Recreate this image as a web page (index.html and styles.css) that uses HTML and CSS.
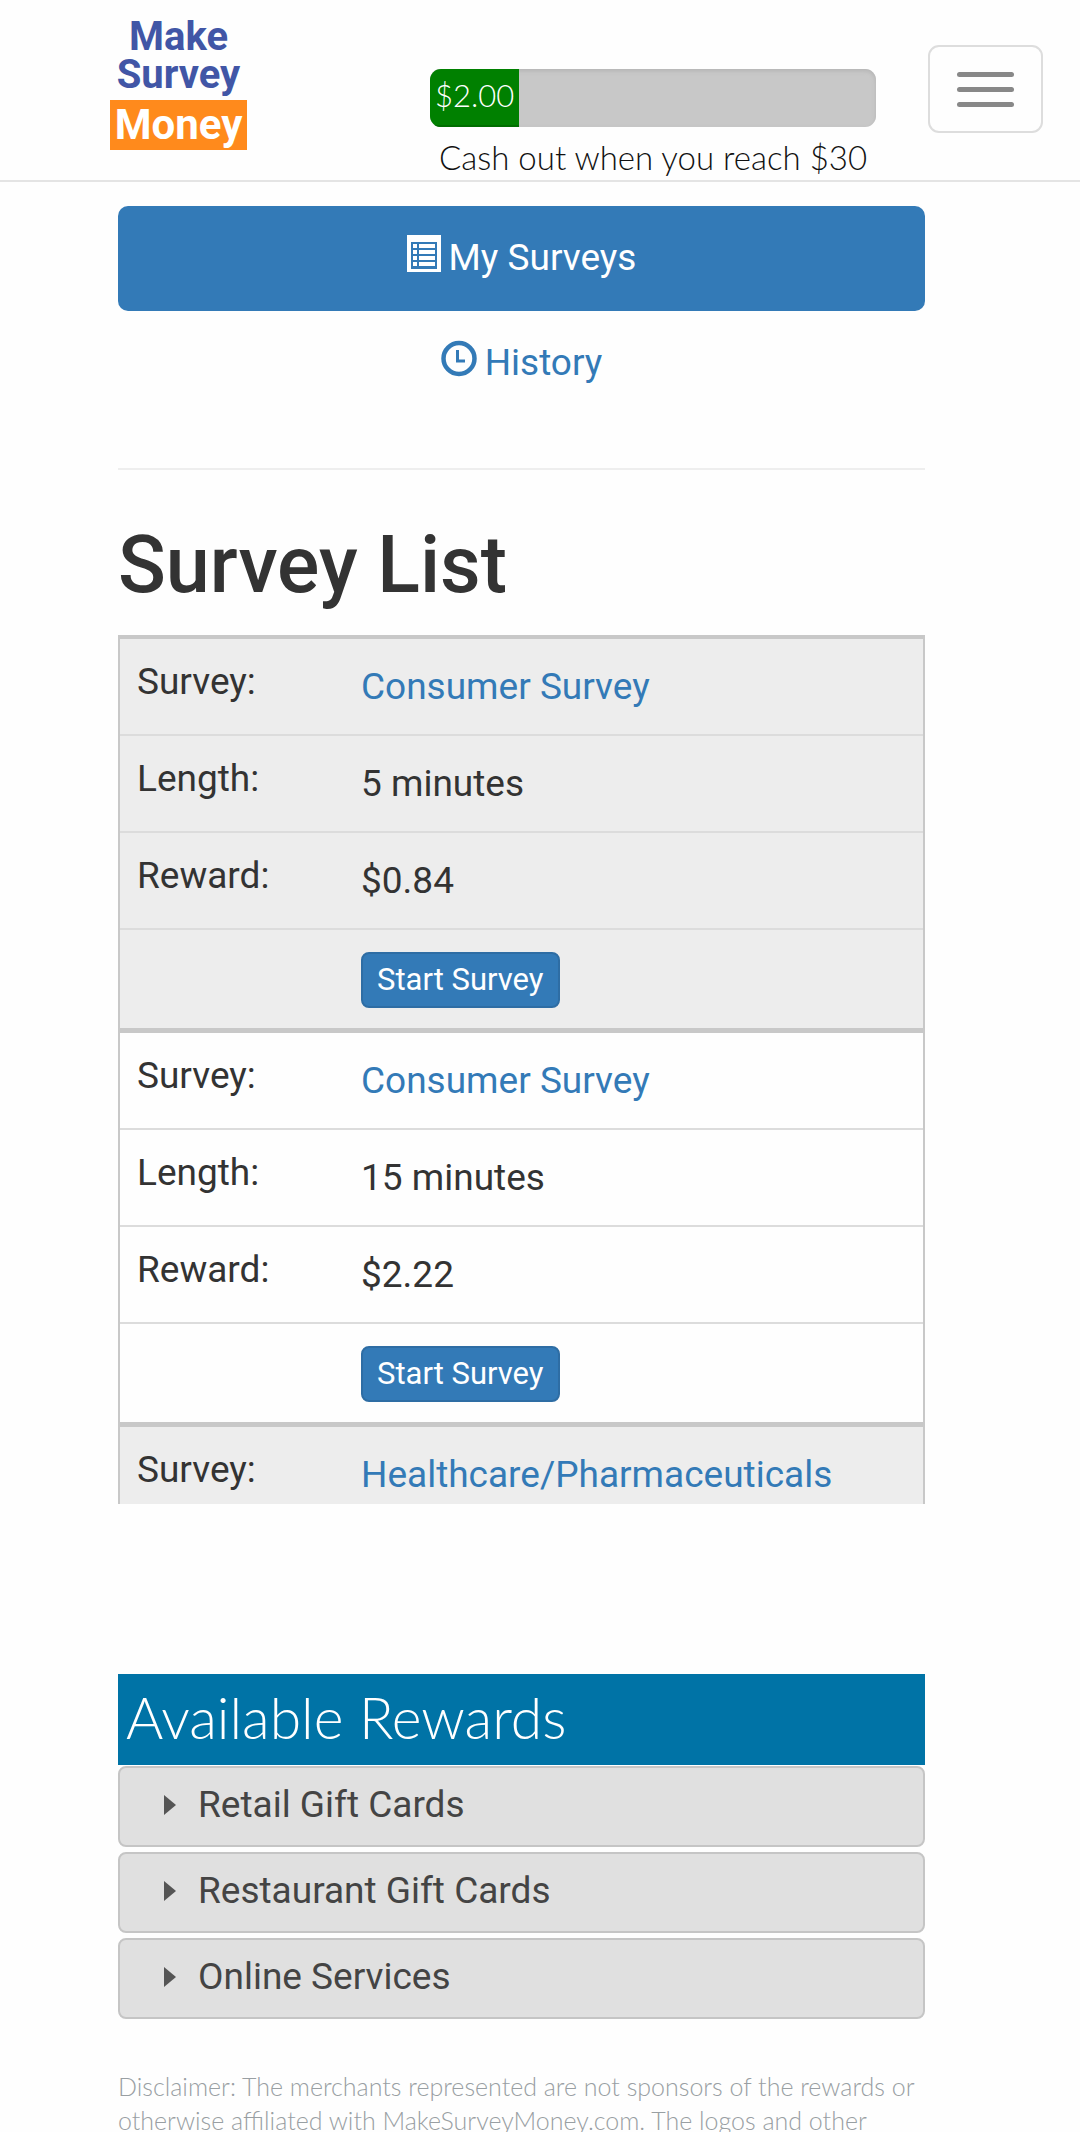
FILE: index.html
```html
<!DOCTYPE html>
<html lang="en">
<head>
<meta charset="utf-8">
<meta name="viewport" content="width=device-width, initial-scale=1">
<title>Make Survey Money</title>
<link rel="stylesheet" href="styles.css">
</head>
<body>
<header class="navbar">
  <a class="logo" href="#"><span>Make</span><span>Survey</span><span class="logo-money">Money</span></a>
  <div class="cashout">
    <div class="progress"><div class="progress-fill" style="width: 20%">$2.00</div></div>
    <p class="cashout-note">Cash out when you reach $30</p>
  </div>
  <button class="menu-toggle" type="button" aria-label="Toggle navigation"><i></i><i></i><i></i></button>
</header>

<main class="content">
  <nav class="tabs">
    <a class="tab tab-active" href="#">
      <svg class="icon" viewBox="0 0 34 37" aria-hidden="true">
        <path fill="currentColor" fill-rule="evenodd" d="M0 0h34v37H0zM4 7v27h26V7z"/>
        <path fill="currentColor" d="M6 9h4v4H6zM12 9h16v4H12zM6 15h4v4H6zM12 15h16v4H12zM6 21h4v4H6zM12 21h16v4H12zM6 27h4v4H6zM12 27h16v4H12z"/>
      </svg>
      My Surveys
    </a>
    <a class="tab" href="#">
      <svg class="icon" viewBox="0 0 36 37" aria-hidden="true">
        <circle cx="18" cy="18.500" r="15.500" fill="none" stroke="currentColor" stroke-width="4.500"/>
        <path d="M16.500 10v11H24" fill="none" stroke="currentColor" stroke-width="3"/>
      </svg>
      History
    </a>
  </nav>
  <hr class="divider">

  <h1 class="title">Survey List</h1>
  <div class="survey-scroll">
    <table class="surveys">
      <tbody>
        <tr><th scope="row">Survey:</th><td><a href="#">Consumer Survey</a></td></tr>
        <tr><th scope="row">Length:</th><td>5 minutes</td></tr>
        <tr><th scope="row">Reward:</th><td>$0.84</td></tr>
        <tr><th></th><td><button class="start" type="button">Start Survey</button></td></tr>
      </tbody>
      <tbody>
        <tr><th scope="row">Survey:</th><td><a href="#">Consumer Survey</a></td></tr>
        <tr><th scope="row">Length:</th><td>15 minutes</td></tr>
        <tr><th scope="row">Reward:</th><td>$2.22</td></tr>
        <tr><th></th><td><button class="start" type="button">Start Survey</button></td></tr>
      </tbody>
      <tbody>
        <tr><th scope="row">Survey:</th><td><a href="#">Healthcare/Pharmaceuticals</a></td></tr>
      </tbody>
    </table>
  </div>

  <section class="rewards">
    <h2 class="rewards-title">Available Rewards</h2>
    <details class="reward"><summary>Retail Gift Cards</summary></details>
    <details class="reward"><summary>Restaurant Gift Cards</summary></details>
    <details class="reward"><summary>Online Services</summary></details>
  </section>

  <p class="disclaimer">Disclaimer: The merchants represented are not sponsors of the rewards or otherwise affiliated with MakeSurveyMoney.com. The logos and other</p>
</main>
</body>
</html>
```
FILE: styles.css
```css
* {
  box-sizing: border-box;
}

body {
  margin: 0;
  background: #fefefe;
  color: #333;
  font: 37px/52px Roboto, sans-serif;
}

a {
  color: #337ab7;
  text-decoration: none;
}

/* Top bar */
.navbar {
  display: flex;
  align-items: flex-start;
  padding: 0 37px 0 110px;
  height: 182px;
  border-bottom: 2px solid #e4e4e4;
}

.logo {
  display: flex;
  flex-direction: column;
  width: 137px;
  padding-top: 18px;
  color: #4156a6;
  font-size: 40px;
  font-weight: 700;
  line-height: 38px;
  text-align: center;
}

.logo-money {
  margin-top: 6px;
  background: #ff8a1c;
  color: #fff;
  font-size: 42px;
  line-height: 50px;
}

.cashout {
  width: 446px;
  margin: 69px 52px 0 auto;
  font-family: Lato, sans-serif;
  font-weight: 300;
}

.progress {
  height: 58px;
  border-radius: 11px;
  background: #c8c8c8;
  box-shadow: inset 0 2px 4px #b4b4b4;
  overflow: hidden;
}

.progress-fill {
  height: 100%;
  background: #008000;
  box-shadow: inset 0 -2px 0 #006d00;
  color: #fff;
  font-size: 31px;
  text-align: center;
}

.cashout-note {
  margin: 4px 0 0;
  color: #111;
  font-size: 33px;
  text-align: center;
  white-space: nowrap;
}

.menu-toggle {
  display: flex;
  flex-direction: column;
  align-items: center;
  justify-content: center;
  gap: 10px;
  width: 115px;
  height: 88px;
  margin-top: 45px;
  padding: 0;
  border: 2px solid #ddd;
  border-radius: 11px;
  background: none;
}

.menu-toggle i {
  width: 57px;
  height: 5px;
  border-radius: 3px;
  background: #888;
}

/* Page column */
.content {
  padding: 24px 155px 0 118px;
}

.tab {
  display: flex;
  align-items: flex-start;
  justify-content: center;
  gap: 8px;
  padding: 26px 0 27px;
  border-radius: 10px;
}

.tab-active {
  background: #337ab7;
  color: #fff;
}

.icon {
  height: 37px;
  margin-top: 3px;
}

.divider {
  height: 2px;
  margin: 52px 0 51px;
  border: 0;
  background: #eee;
}

.title {
  margin: 0 0 26px;
  font-size: 79px;
  font-weight: 500;
  line-height: 88px;
}

/* Survey list */
.survey-scroll {
  max-height: 869px;
  overflow-y: auto;
  scrollbar-width: none;
  border: solid #c8c8c8;
  border-width: 4px 2px 0;
}

.surveys {
  width: 100%;
  border-collapse: separate;
  border-spacing: 0;
}

.surveys tbody:nth-child(odd) {
  background: #ededed;
}

.surveys th,
.surveys td {
  padding: 22px 0 21px;
  border-bottom: 2px solid #dcdcdc;
  font-weight: 400;
  text-align: left;
}

.surveys th {
  width: 241px;
  padding: 17px 17px 0;
  vertical-align: top;
}

.surveys tr:nth-child(4) > * {
  padding-bottom: 20px;
  border-bottom: 5px solid #c8c8c8;
}

.start {
  display: block;
  padding: 0 14px;
  border: 2px solid #2e6da4;
  border-radius: 8px;
  background: #337ab7;
  color: #fff;
  font: 31px/52px Roboto, sans-serif;
}

/* Rewards */
.rewards {
  display: flex;
  flex-direction: column;
  gap: 5px;
  margin-top: 170px;
}

.rewards-title {
  margin: 0 0 -4px;
  padding: 11px 8px 15px;
  background: #0073a6;
  color: #fff;
  font: 300 57px/65px Lato, sans-serif;
}

.reward {
  border: 2px solid #c5c5c5;
  border-radius: 8px;
  background: #e0e0e0;
  color: #444;
}

.reward summary {
  display: flex;
  align-items: center;
  gap: 22px;
  padding: 11px 44px 14px;
}

.reward summary::before {
  content: "";
  width: 12px;
  height: 20px;
  background: #555;
  clip-path: polygon(0 0, 100% 50%, 0 100%);
}

.disclaimer {
  margin: 50px 0 0;
  color: #999fa3;
  font: 300 25px/34px Lato, sans-serif;
}
```
